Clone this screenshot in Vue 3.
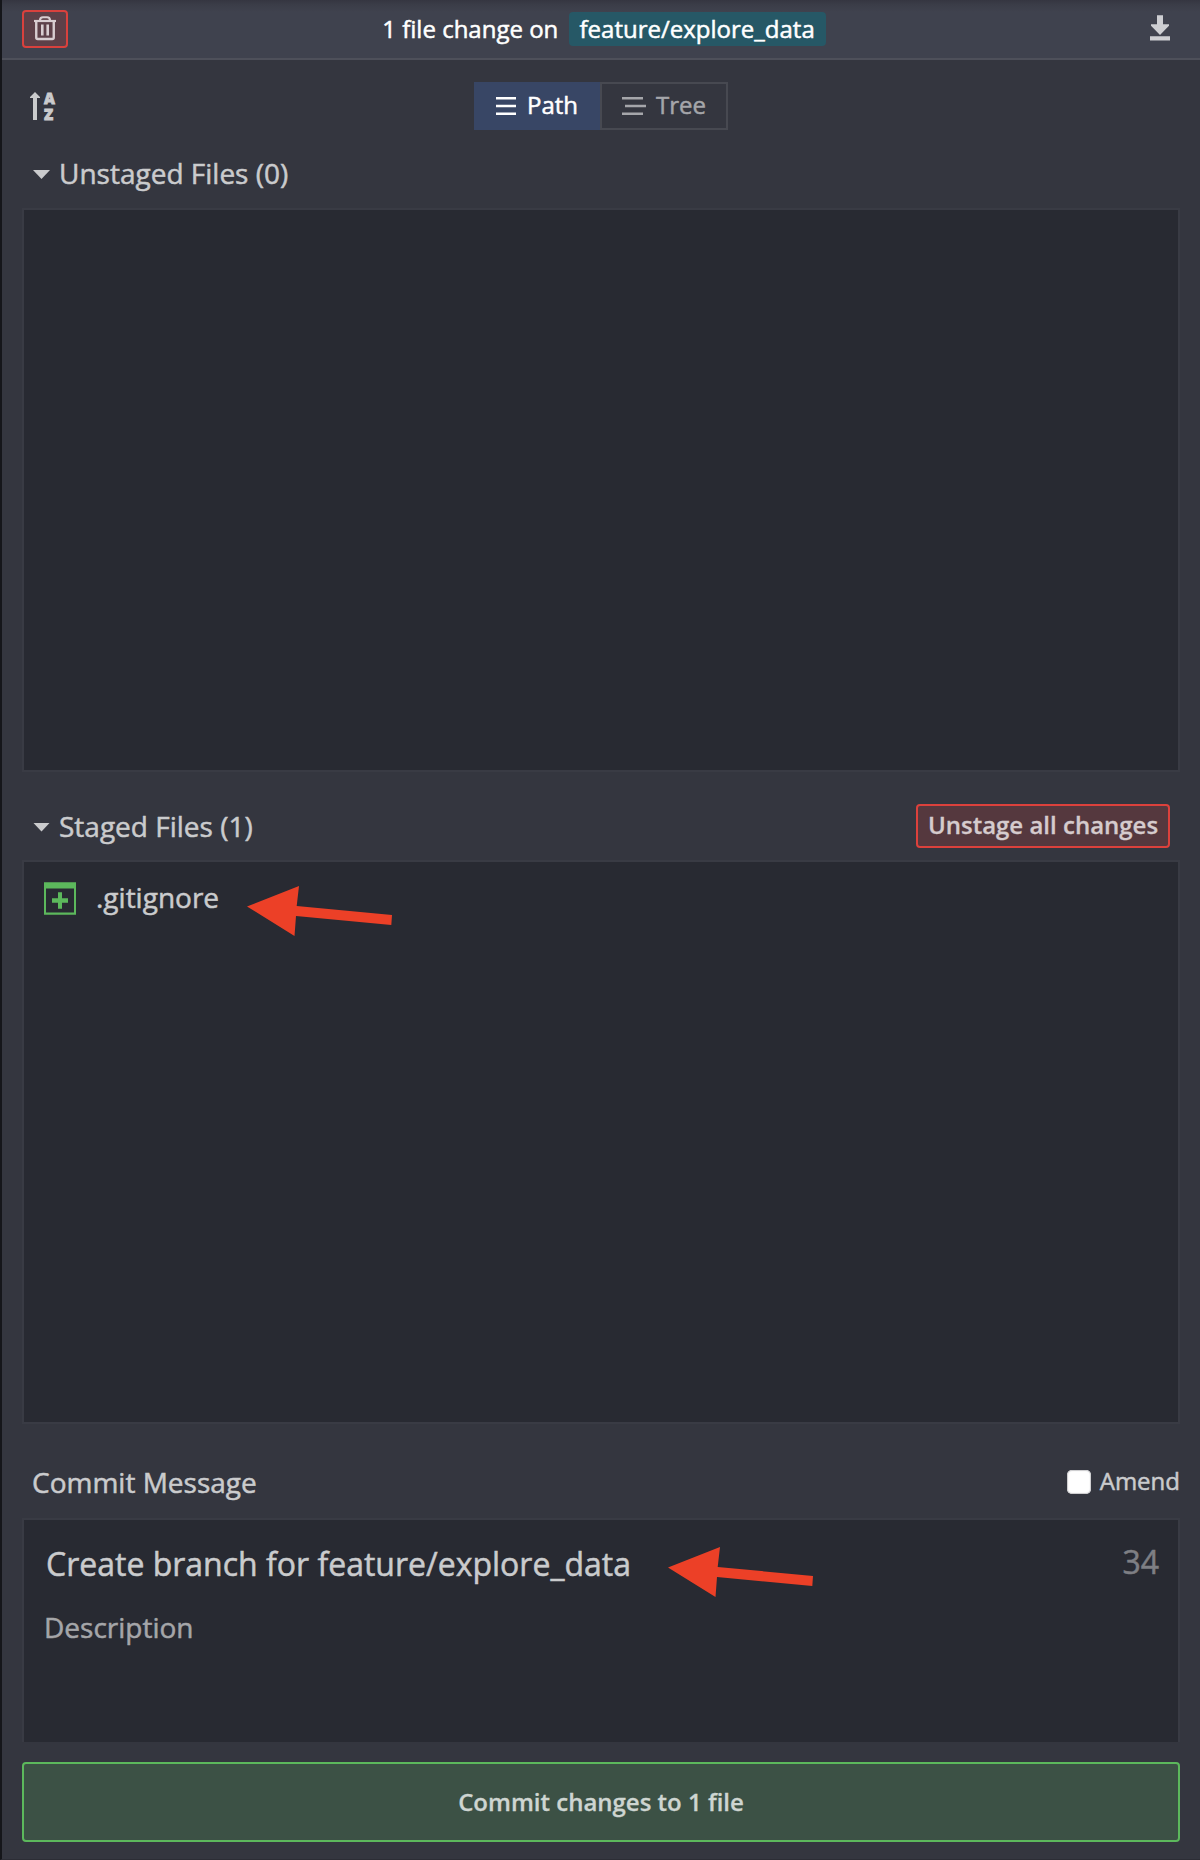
<script setup>
import { ref } from 'vue'

const branch = 'feature/explore_data'
const summary = ref('Create branch for feature/explore_data')
const staged = ['.gitignore']
</script>

<template>
  <main class="panel">
    <header class="topbar">
      <button class="discard" aria-label="Discard all changes">
        <svg width="22" height="26" viewBox="0 0 22 26" fill="none" stroke="#d8cdd0">
          <path d="M0 5h22" stroke-width="2.200" />
          <path d="M6 4.500C6 2 7.500 1.250 9 1.250h4C14.500 1.250 16 2 16 4.500" stroke-width="2.200" />
          <path d="M2.250 5v16.500q0 1.500 1.500 1.500h14.500q1.500 0 1.500-1.500V5" stroke-width="2.400" />
          <path d="M8.300 8.500v11M13.700 8.500v11" stroke-width="2.600" />
        </svg>
      </button>
      <p class="title">1 file change on <span class="branch">{{ branch }}</span></p>
      <svg class="download" width="20" height="26" viewBox="0 0 20 26" fill="#cdced2">
        <path d="M7 .3h6v9h6v1.500L10 20 1 10.800V9.300h6zM0 21.200h20v4.400H0z" />
      </svg>
    </header>

    <div class="toolbar">
      <div class="sort">
        <svg width="10" height="28" viewBox="0 0 10 28" fill="#cacbcc">
          <path d="M5 0l5 5v1H7v22H3V6H0V5z" />
        </svg>
        <span class="letters"><b>A</b><b>Z</b></span>
      </div>
      <div class="toggle">
        <button class="option active">
          <svg width="20" height="18" viewBox="0 0 20 18" fill="#fff">
            <path d="M0 0h20v2.400H0zM0 7.800h20v2.400H0zM0 15.600h20V18H0z" />
          </svg>
          <span>Path</span>
        </button>
        <button class="option">
          <svg width="24" height="18" viewBox="0 0 24 18" fill="#a5a6aa">
            <path d="M0 0h21v2.600H0zM3 7.700h21v2.600H3zM0 15.400h21V18H0z" />
          </svg>
          <span>Tree</span>
        </button>
      </div>
    </div>

    <section class="section-head unstaged-head">
      <h2><i class="caret"></i>Unstaged Files (0)</h2>
    </section>
    <div class="list"></div>

    <section class="section-head staged-head">
      <h2><i class="caret"></i>Staged Files ({{ staged.length }})</h2>
      <button class="unstage">Unstage all changes</button>
    </section>
    <div class="list">
      <div v-for="file in staged" :key="file" class="file">
        <svg width="32" height="33" viewBox="0 0 32 33" fill="#5cb85c">
          <path fill-rule="evenodd" d="M0 .3h32v32.400H0zM2 6.500v24h28v-24z" />
          <path d="M14 10.300h4v6h6v4.400h-6v6h-4v-6H8v-4.400h6z" />
        </svg>
        <span>{{ file }}</span>
        <svg class="arrow file-arrow" width="146" height="50" viewBox="0 0 146 50">
          <path d="M0 20.500L52 0 49.700 20 145 29 144.300 39 49 30 47.500 50z" fill="#ec4027" />
        </svg>
      </div>
    </div>

    <section class="section-head commit-head">
      <h2>Commit Message</h2>
      <label class="amend"><span class="check"></span>Amend</label>
    </section>
    <div class="message">
      <div class="summary">
        <span>{{ summary }}</span>
        <svg class="arrow summary-arrow" width="146" height="50" viewBox="0 0 146 50">
          <path d="M0 20.500L52 0 49.700 20 145 29 144.300 39 49 30 47.500 50z" fill="#ec4027" />
        </svg>
        <span class="count">{{ 72 - summary.length }}</span>
      </div>
      <p class="description">Description</p>
    </div>
    <button class="commit">Commit changes to {{ staged.length }} file</button>
  </main>
</template>

<style>
body {
  margin: 0;
  background: #34363f;
}
</style>

<style scoped>
.panel {
  box-sizing: border-box;
  height: 1860px;
  border-left: 2px solid #15161a;
  border-bottom: 1px solid #2c2d35;
  background: #34363f;
  color: #cacbcd;
  font-family: "Open Sans", "Noto Sans", sans-serif;
  font-size: 24px;
  line-height: 34px;
  -webkit-text-stroke: 0.5px currentColor;
  display: flex;
  flex-direction: column;
  overflow: hidden;
}
button {
  box-sizing: border-box;
  margin: 0;
  padding: 0;
  font: inherit;
  color: inherit;
  background: none;
  border: 0;
}
h2, p {
  margin: 0;
  font-weight: 400;
}
svg {
  display: block;
  flex: none;
}
.topbar {
  box-sizing: border-box;
  flex: none;
  height: 60px;
  border-bottom: 2px solid #4e505a;
  background: linear-gradient(#353641 0, #3b3d48 5px, #3f424e 12px);
  display: grid;
  grid-template-columns: 46px 1fr 20px;
  align-items: center;
  padding: 0 30px 0 20px;
}
.discard {
  width: 46px;
  height: 38px;
  border: 2px solid #d9413d;
  border-radius: 4px;
  background: #5d4048;
  display: flex;
  align-items: center;
  justify-content: center;
}
.title {
  color: #fff;
  display: flex;
  justify-content: center;
  white-space: pre;
  padding-right: 10px;
}
.branch {
  border-radius: 4px;
  background: #265866;
  padding: 0 11px;
  margin-left: 4px;
}
.download {
  margin-bottom: 2px;
}
.toolbar {
  flex: none;
  height: 92px;
  display: grid;
  grid-template-columns: 1fr auto 1fr;
  align-items: center;
}
.sort {
  display: flex;
  gap: 4px;
  padding-left: 28px;
}
.letters {
  display: flex;
  flex-direction: column;
  justify-content: space-between;
  height: 28px;
  font: 700 15px/12px "Open Sans", sans-serif;
  -webkit-text-stroke: 0.8px currentColor;
}
.letters b {
  height: 12px;
}
.toggle {
  display: flex;
}
.option {
  height: 48px;
  width: 128px;
  border: 2px solid #474951;
  color: #a5a6aa;
  display: flex;
  align-items: center;
  padding: 0 0 2px 20px;
  gap: 10px;
}
.option.active {
  width: 126px;
  border-color: #384665;
  background: #384665;
  color: #fff;
  gap: 11px;
}
.option svg {
  margin-top: 2px;
}
.section-head {
  flex: none;
  display: flex;
  justify-content: space-between;
  align-items: center;
  padding: 0 30px 0 31px;
}
.section-head h2 {
  font-size: 28px;
  display: flex;
  align-items: center;
}
.unstaged-head {
  height: 42px;
  padding-bottom: 14px;
}
.staged-head {
  height: 54px;
  padding: 27px 30px 7px 31px;
}
.staged-head h2 {
  margin-bottom: 1px;
}
.commit-head {
  height: 72px;
  padding: 22px 20px 0 30px;
}
.caret {
  width: 17px;
  height: 9px;
  margin: 3px 9px 0 0;
  background: currentColor;
  clip-path: polygon(0 0, 100% 0, 50% 100%);
}
.list {
  box-sizing: border-box;
  flex: none;
  height: 564px;
  margin: 0 20px;
  border: 2px solid #393b44;
  background: #282a32;
}
.unstage {
  width: 254px;
  height: 44px;
  border: 2px solid #dc413c;
  border-radius: 4px;
  background: #55383e;
  color: #d5cbcd;
  font-weight: 600;
  padding-bottom: 2px;
  -webkit-text-stroke: 0.3px currentColor;
}
.file {
  position: relative;
  display: flex;
  align-items: center;
  gap: 20px;
  padding: 20px 0 0 20px;
  height: 33px;
  font-size: 28px;
}
.file span {
  padding-bottom: 4px;
}
.arrow {
  position: absolute;
}
.file-arrow {
  left: 223px;
  top: 24px;
}
.amend {
  display: flex;
  align-items: center;
  gap: 9px;
  padding-bottom: 3px;
}
.check {
  width: 24px;
  height: 24px;
  margin-top: 2px;
  border-radius: 5px;
  background: #fff;
  box-shadow: inset 0 0 1px 1px #c9c9cb;
}
.message {
  box-sizing: border-box;
  flex: none;
  height: 224px;
  margin: 0 20px 20px;
  border: 2px solid #393b44;
  border-bottom: 0;
  background: #282a32;
}
.summary {
  position: relative;
  display: flex;
  justify-content: space-between;
  font-size: 32px;
  line-height: 44px;
  padding: 22px 19px 0 22px;
}
.summary-arrow {
  left: 644px;
  top: 27px;
}
.count {
  color: #7e7f84;
  margin-top: -2px;
}
.description {
  color: #a5a6a9;
  font-size: 28px;
  line-height: 38px;
  padding: 22px 0 0 20px;
}
.commit {
  flex: none;
  height: 80px;
  margin: 0 20px;
  border: 2px solid #5cb85c;
  border-radius: 4px;
  background: #3c5145;
  color: #ced5d1;
  font-weight: 600;
  -webkit-text-stroke: 0.3px currentColor;
}
</style>
